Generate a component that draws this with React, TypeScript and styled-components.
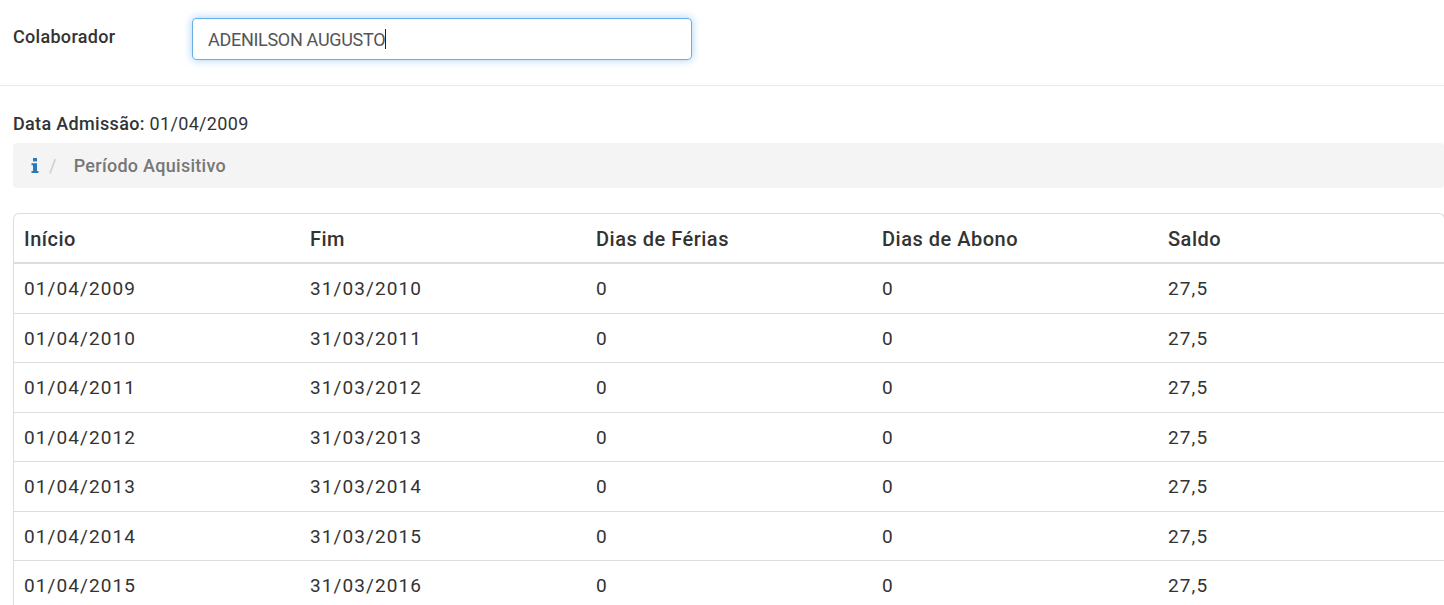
import { createGlobalStyle } from 'styled-components';
import styled from 'styled-components';

const GlobalStyle = createGlobalStyle`
    html, body {
        margin: 0;
        padding: 0;
        height: 605px;
        overflow: hidden;
        background: #fff;
        font-family: Roboto, "Liberation Sans", sans-serif;
        color: #333;
    }
`;

const Page = styled.div`
    width: 1444px;
    overflow: hidden;
`;

const FilterBar = styled.div`
    display: flex;
    height: 86px;
    padding: 18px 0 0 13px;
    box-sizing: border-box;
    border-bottom: 1px solid #eaeaea;
    align-items: flex-start;
`;

const FilterLabel = styled.label`
    width: 179px;
    font-size: 18px;
    font-weight: 500;
    line-height: 38px;
    letter-spacing: 0.3px;
    color: #333;
`;

const TextBox = styled.div`
    width: 500px;
    height: 42px;
    box-sizing: border-box;
    padding: 0 15px;
    display: flex;
    align-items: center;
    border: 1px solid #66afe9;
    border-radius: 4px;
    box-shadow: 0 0 8px rgba(102, 175, 233, 0.6);
    font-size: 18px;
    letter-spacing: -0.3px;
    color: #555;
`;

const Caret = styled.span`
    width: 1px;
    height: 20px;
    background: #222;
`;

const Content = styled.div`
    padding: 28px 0 0 13px;
`;

const Admission = styled.div`
    font-size: 18px;
    line-height: 20px;
    letter-spacing: 0.33px;
    height: 29px;
    color: #333;

    strong {
        font-weight: 500;
    }
`;

const Breadcrumb = styled.div`
    display: flex;
    align-items: center;
    height: 45px;
    padding-left: 18px;
    background: #f4f4f4;
    border-radius: 4px;
    font-size: 18px;
    font-weight: 500;
    letter-spacing: 0.28px;
    color: #777;
`;

const Separator = styled.span`
    margin: 0 17px 0 10px;
    font-weight: 400;
    color: #ccc;
`;

const Table = styled.div`
    margin: 25px -1px 0 0;
    border: 1px solid #ddd;
    border-bottom: 0;
    border-radius: 6px 6px 0 0;
`;

const Row = styled.div<{ $head?: boolean }>`
    display: grid;
    grid-template-columns: repeat(5, 286px);
    height: ${({ $head }) => ($head ? '50px' : '49.5px')};
    box-sizing: border-box;
    align-items: center;
    padding: 1px 0 0 10px;
    border-bottom: ${({ $head }) => ($head ? '2px solid #ddd' : '1px solid #ddd')};
    font-size: ${({ $head }) => ($head ? '20px' : '19px')};
    font-weight: ${({ $head }) => ($head ? 500 : 400)};
    letter-spacing: ${({ $head }) => ($head ? '0.5px' : '1.1px')};
    color: #333;
`;

const rows = [
    ['01/04/2009', '31/03/2010'],
    ['01/04/2010', '31/03/2011'],
    ['01/04/2011', '31/03/2012'],
    ['01/04/2012', '31/03/2013'],
    ['01/04/2013', '31/03/2014'],
    ['01/04/2014', '31/03/2015'],
    ['01/04/2015', '31/03/2016'],
];

const InfoIcon = () => (
    <svg width="8" height="15" viewBox="0 0 8 15" fill="#2a7ab8">
        <rect x="2" y="0" width="4" height="3.4" />
        <path d="M0.5 5.2H6V13H7.5V15H0.5V13H2V7.2H0.5Z" />
    </svg>
);

const App = () => (
    <Page>
        <GlobalStyle />
        <FilterBar>
            <FilterLabel>Colaborador</FilterLabel>
            <TextBox>
                ADENILSON AUGUSTO
                <Caret />
            </TextBox>
        </FilterBar>
        <Content>
            <Admission>
                <strong>Data Admissão:</strong> 01/04/2009
            </Admission>
            <Breadcrumb>
                <InfoIcon />
                <Separator>/</Separator>
                Período Aquisitivo
            </Breadcrumb>
            <Table>
                <Row $head>
                    <span>Início</span>
                    <span>Fim</span>
                    <span>Dias de Férias</span>
                    <span>Dias de Abono</span>
                    <span>Saldo</span>
                </Row>
                {rows.map(([start, end]) => (
                    <Row key={start}>
                        <span>{start}</span>
                        <span>{end}</span>
                        <span>0</span>
                        <span>0</span>
                        <span>27,5</span>
                    </Row>
                ))}
            </Table>
        </Content>
    </Page>
);

export default App;
